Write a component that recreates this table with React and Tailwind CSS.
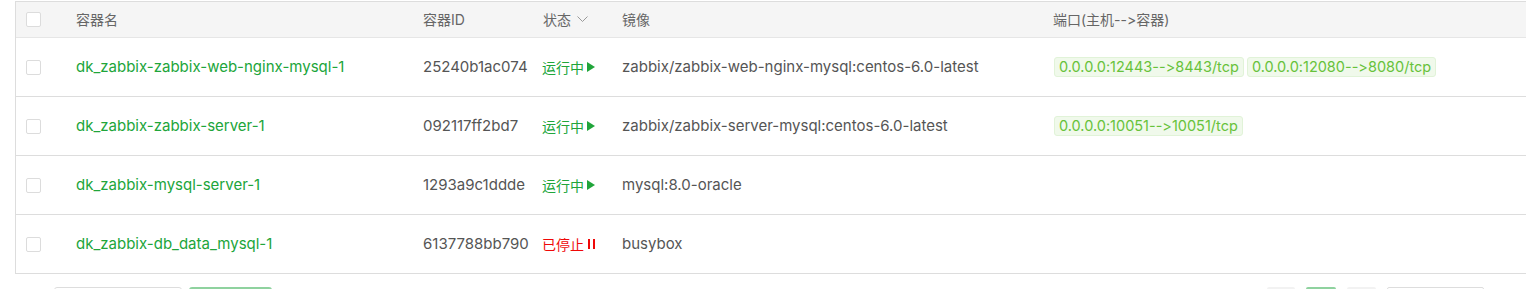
const rows = [
  {
    name: 'dk_zabbix-zabbix-web-nginx-mysql-1',
    id: '25240b1ac074',
    running: true,
    image: 'zabbix/zabbix-web-nginx-mysql:centos-6.0-latest',
    ports: ['0.0.0.0:12443-->8443/tcp', '0.0.0.0:12080-->8080/tcp'],
  },
  {
    name: 'dk_zabbix-zabbix-server-1',
    id: '092117ff2bd7',
    running: true,
    image: 'zabbix/zabbix-server-mysql:centos-6.0-latest',
    ports: ['0.0.0.0:10051-->10051/tcp'],
  },
  {
    name: 'dk_zabbix-mysql-server-1',
    id: '1293a9c1ddde',
    running: true,
    image: 'mysql:8.0-oracle',
    ports: [],
  },
  {
    name: 'dk_zabbix-db_data_mysql-1',
    id: '6137788bb790',
    running: false,
    image: 'busybox',
    ports: [],
  },
]

const cols = 'grid grid-cols-[46px_347px_120px_79px_431px_1fr]'

function Checkbox() {
  return <span className="block w-[15px] h-[15px] bg-white border border-[#dcdcdc] rounded-[2px]" />
}

function Status({ running }) {
  if (running) {
    return (
      <span className="flex items-center gap-[3px] text-[14px] text-[#20a53a]">
        运行中
        <svg width="8" height="10" viewBox="0 0 8 10">
          <path d="M0 0L8 5L0 10Z" fill="#20a53a" />
        </svg>
      </span>
    )
  }
  return (
    <span className="flex items-center gap-[4px] text-[14px] text-[#ef0808]">
      已停止
      <svg width="7" height="10" viewBox="0 0 7 10">
        <rect x="0" y="0" width="2" height="10" fill="#ef0808" />
        <rect x="5" y="0" width="2" height="10" fill="#ef0808" />
      </svg>
    </span>
  )
}

export default function App() {
  return (
    <div
      className="w-[1526px] h-[289px] overflow-hidden bg-white text-[15px] text-[#666] [font-variant-ligatures:none]"
      style={{ fontFamily: 'Inter, "Noto Sans CJK SC", sans-serif' }}
    >
      <div className="ml-[15px] mt-px w-[1560px] border-l border-t border-b border-[#ddd]">
        <div className={`${cols} h-[36px] items-center bg-[#f5f5f5] border-b border-[#e6e6e6] text-[14px]`}>
          <div className="pl-[10px]"><Checkbox /></div>
          <div className="pl-[14px]">容器名</div>
          <div className="pl-[14px]">容器ID</div>
          <div className="pl-[14px] flex items-center gap-[6px]">
            状态
            <svg width="11" height="7" viewBox="0 0 11 7">
              <path d="M0.5 0.5L5.5 5.5L10.5 0.5" fill="none" stroke="#999" strokeWidth="1" />
            </svg>
          </div>
          <div className="pl-[14px]">镜像</div>
          <div className="pl-[14px]">端口(主机--&gt;容器)</div>
        </div>
        {rows.map((r, i) => (
          <div
            key={r.id}
            className={`${cols} items-center ${i < rows.length - 1 ? 'h-[59px] border-b border-[#ddd]' : 'h-[58px]'}`}
          >
            <div className="pl-[10px]"><Checkbox /></div>
            <div className="pl-[14px] text-[#20a53a]">{r.name}</div>
            <div className="pl-[14px] text-[#555]">{r.id}</div>
            <div className="pl-[13px]"><Status running={r.running} /></div>
            <div className="pl-[14px] text-[#555]">{r.image}</div>
            <div className="pl-[15px] flex gap-[3px]">
              {r.ports.map((p) => (
                <span
                  key={p}
                  className="h-[20px] leading-[18px] px-[4px] text-[14.5px] bg-[#f0f9eb] border border-[#e1f3d8] rounded-[3px] text-[#67c23a]"
                >
                  {p}
                </span>
              ))}
            </div>
          </div>
        ))}
      </div>
      <div className="flex mt-[13px]">
        <div className="flex gap-[7px] ml-[54px]">
          <span className="w-[128px] h-[30px] border border-[#ddd] rounded-[3px] bg-white" />
          <span className="w-[83px] h-[30px] rounded-[3px] bg-[#8fd29f]" />
        </div>
        <div className="flex gap-[11px] ml-[995px]">
          <span className="w-[28px] h-[30px] rounded-[2px] bg-[#f2f2f2]" />
          <span className="w-[30px] h-[30px] rounded-[2px] bg-[#8fd29f]" />
          <span className="w-[29px] h-[30px] rounded-[2px] bg-[#f2f2f2]" />
          <span className="w-[97px] h-[30px] rounded-[2px] border border-[#ddd]" />
        </div>
      </div>
    </div>
  )
}
